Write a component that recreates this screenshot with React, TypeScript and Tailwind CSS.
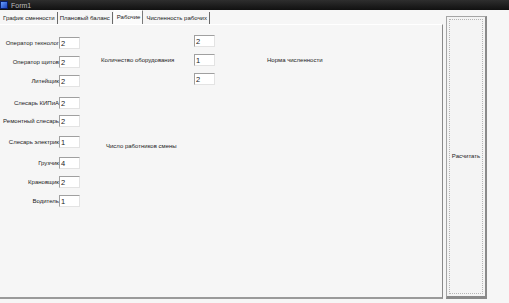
import React from 'react';

const font = { fontFamily: '"Liberation Sans", Arial, sans-serif' };

type Row = { label: string; value: string; mt: string };

const rows: Row[] = [
    { label: 'Оператор технолог', value: '2', mt: 'mt-[12px]' },
    { label: 'Оператор щитов', value: '2', mt: 'mt-[7px]' },
    { label: 'Литейщик', value: '2', mt: 'mt-[7px]' },
    { label: 'Слесарь КИПиА', value: '2', mt: 'mt-[10px]' },
    { label: 'Ремонтный слесарь', value: '2', mt: 'mt-[6px]' },
    { label: 'Слесарь электрик', value: '1', mt: 'mt-[9px]' },
    { label: 'Грузчик', value: '4', mt: 'mt-[9px]' },
    { label: 'Крановщик', value: '2', mt: 'mt-[7px]' },
    { label: 'Водитель', value: '1', mt: 'mt-[7px]' },
];

const Field: React.FC<{ value: string }> = ({ value }) => (
    <div className="w-[21px] h-[12px] shrink-0 bg-white border-t border-l border-t-[#a0a0a0] border-l-[#a0a0a0] border-b border-r border-b-[#e3e3e3] border-r-[#e3e3e3] pl-[1px] text-[7.5px] leading-[11px] text-[#222]">
        {value}
    </div>
);

const tabs = ['График сменности', 'Плановый баланс', 'Рабочие', 'Численность рабочих'];

export default function App() {
    return (
        <div className="w-[509px] h-[303px] overflow-hidden bg-[#f6f6f6] text-[6px] text-[#1a1a1a] flex flex-col" style={font}>
            {/* title bar */}
            <div className="h-[10px] shrink-0 bg-gradient-to-b from-[#2e2e2e] to-[#111] flex items-center">
                <div className="w-[8px] h-[8px] bg-gradient-to-br from-[#6aa0ff] to-[#1d3fb8] border border-[#0a1f6a]" />
                <span className="ml-[3px] text-[7px] text-[#bdbdbd] leading-none">Form1</span>
            </div>
            <div className="flex flex-1">
                <div className="w-[443px] flex flex-col">
                    {/* tabs */}
                    <div className="h-[14px] flex items-end pl-[1px]">
                        {tabs.map((t, i) =>
                            i === 2 ? (
                                <div key={t} className="h-[14px] px-[2px] flex items-center bg-[#fbfbfb] border-l border-l-white border-r border-r-[#7a7a7a] border-t border-t-white mx-[1px]">
                                    {t}
                                </div>
                            ) : (
                                <div key={t} className="h-[12px] px-[2px] flex items-center border-r border-r-[#6a6a6a]">
                                    {t}
                                </div>
                            )
                        )}
                    </div>
                    {/* page */}
                    <div className="h-[275px] border-t border-t-white border-r border-r-[#8a8a8a] border-b-2 border-b-[#9a9a9a] flex">
                        <div className="w-[80px] flex flex-col">
                            {rows.map(r => (
                                <div key={r.label} className={`${r.mt} flex items-center justify-end h-[12px]`}>
                                    <span className="whitespace-nowrap">{r.label}</span>
                                    <Field value={r.value} />
                                </div>
                            ))}
                        </div>
                        <div className="flex flex-col">
                            <div className="mt-[10px] flex items-center">
                                <span className="ml-[21px] w-[93px] whitespace-nowrap">Количество оборудования</span>
                                <div className="flex flex-col gap-[7px]">
                                    <Field value="2" />
                                    <Field value="1" />
                                    <Field value="2" />
                                </div>
                                <span className="ml-[52px] whitespace-nowrap">Норма численности</span>
                            </div>
                            <span className="mt-[57px] ml-[26px] whitespace-nowrap">Число работников смены</span>
                        </div>
                    </div>
                </div>
                {/* button */}
                <div className="ml-[3px] mt-[6px] w-[41px] h-[283px] border border-[#a5a5a5] border-r-2 border-r-[#8a8a8a] border-b-[3px] border-b-[#8a8a8a] bg-[#f4f4f4] p-[2px]">
                    <div className="w-full h-full border border-dotted border-[#b5b5b5] flex items-center justify-center">
                        <span className="whitespace-nowrap">Расчитать</span>
                    </div>
                </div>
            </div>
        </div>
    );
}
